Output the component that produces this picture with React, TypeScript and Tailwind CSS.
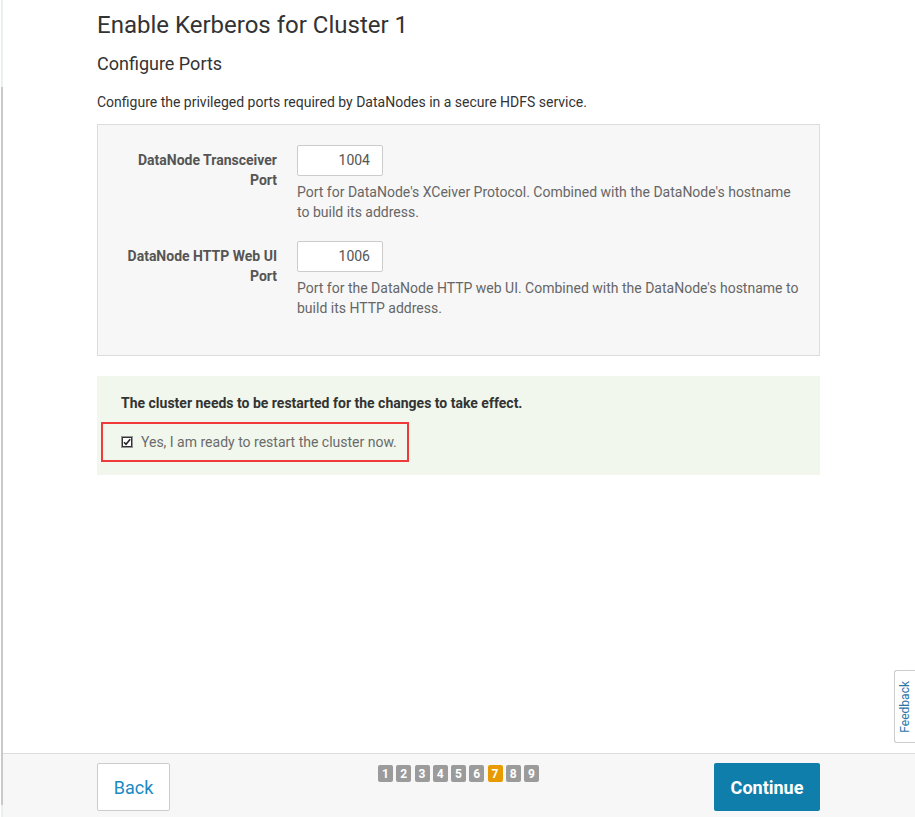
import React from 'react'

const steps = [1, 2, 3, 4, 5, 6, 7, 8, 9]
const current = 7

const ports = [
  {
    label: 'DataNode Transceiver Port',
    value: '1004',
    help: "Port for DataNode's XCeiver Protocol. Combined with the DataNode's hostname to build its address.",
  },
  {
    label: 'DataNode HTTP Web UI Port',
    value: '1006',
    help: "Port for the DataNode HTTP web UI. Combined with the DataNode's hostname to build its HTTP address.",
  },
]

const CheckedBox = () => (
  <svg width="12" height="12" viewBox="0 0 12 12" className="shrink-0">
    <rect x="0.5" y="0.5" width="11" height="11" fill="#fff" stroke="#333" strokeDasharray="1 1" />
    <rect x="1.5" y="1.5" width="9" height="9" fill="none" stroke="#333" />
    <path d="M3 6.2 L5 8.2 L9.2 3.2" fill="none" stroke="#222" strokeWidth="1.6" />
  </svg>
)

export default function App() {
  return (
    <div className="flex min-h-screen bg-white font-['Roboto',sans-serif] text-[#333]">
      {/* left window edge */}
      <div className="flex w-[3px] flex-col border-l border-white">
        <div className="h-[87px] bg-[#eaf0f0]" />
        <div className="flex-1 bg-[#c9c9c9]" />
        <div className="h-[12px] bg-[#eaf0f0]" />
      </div>

      <div className="flex flex-1 flex-col">
        <main className="flex-1">
          <div className="ml-[94px] w-[723px] pt-[11px]">
            <h1 className="text-[24px] leading-[28px] text-[#333]">Enable Kerberos for Cluster 1</h1>
            <h2 className="mt-[14px] text-[18px] leading-[22px] text-[#333]">Configure Ports</h2>
            <p className="mt-[17px] text-[14px] leading-[20px] text-[#333]">
              Configure the privileged ports required by DataNodes in a secure HDFS service.
            </p>

            <div className="mt-[12px] border border-[#ddd] bg-[#f7f7f7] pb-[18px] pl-[19px] pr-[20px] pt-[20px]">
              {ports.map(port => (
                <div key={port.label} className="mb-[19px] flex gap-[20px]">
                  <label className="w-[160px] shrink-0 pt-[5px] text-right text-[14px] font-bold leading-[20px] text-[#555]">
                    {port.label}
                  </label>
                  <div className="flex-1">
                    <div className="flex h-[31px] w-[86px] items-center justify-end rounded-[2px] border border-[#ccc] bg-white pr-[12px] text-[14px] text-[#555]">
                      {port.value}
                    </div>
                    <p className="mt-[6px] text-[14px] leading-[20px] text-[#666]">{port.help}</p>
                  </div>
                </div>
              ))}
            </div>

            <div className="mt-[20px] bg-[#f1f7ec] px-[24px] pb-[13px] pt-[17px]">
              <p className="text-[14px] font-bold leading-[20px] text-[#333]">
                The cluster needs to be restarted for the changes to take effect.
              </p>
              <div className="ml-[-20px] mt-[9px] inline-flex items-center gap-[8px] border-2 border-[#f03a3a] py-[8px] pl-[18px] pr-[10px]">
                <CheckedBox />
                <span className="text-[14px] leading-[20px] text-[#6b6b6b]">Yes, I am ready to restart the cluster now.</span>
              </div>
            </div>
          </div>
        </main>

        <footer className="h-[64px] border-t border-[#ddd] bg-[#f7f7f7]">
          <div className="ml-[94px] grid w-[723px] grid-cols-[1fr_auto_1fr] items-start pt-[9px]">
            <button className="h-[48px] w-[73px] justify-self-start rounded-[2px] border border-[#ccc] bg-white text-[18px] text-[#1a8ac4]">
              Back
            </button>
            <div className="mt-[2px] flex gap-[3.25px]">
              {steps.map(step => (
                <span
                  key={step}
                  className={`flex h-[17px] w-[15px] items-center justify-center rounded-[2px] text-[12px] font-bold text-white ${
                    step === current ? 'bg-[#e89b00]' : 'bg-[#9b9b9b]'
                  }`}
                >
                  {step}
                </span>
              ))}
            </div>
            <button className="h-[48px] w-[106px] justify-self-end rounded-[2px] bg-[#0f7eab] text-[18px] font-bold text-white">
              Continue
            </button>
          </div>
        </footer>
      </div>

      {/* feedback tab */}
      <div className="fixed right-0 top-[670px] flex h-[73px] w-[21px] items-center justify-center rounded-l-[3px] border border-r-0 border-[#ccc] bg-white">
        <span className="rotate-180 text-[12px] leading-none text-[#2a74a8] [writing-mode:vertical-rl]">Feedback</span>
      </div>
    </div>
  )
}
